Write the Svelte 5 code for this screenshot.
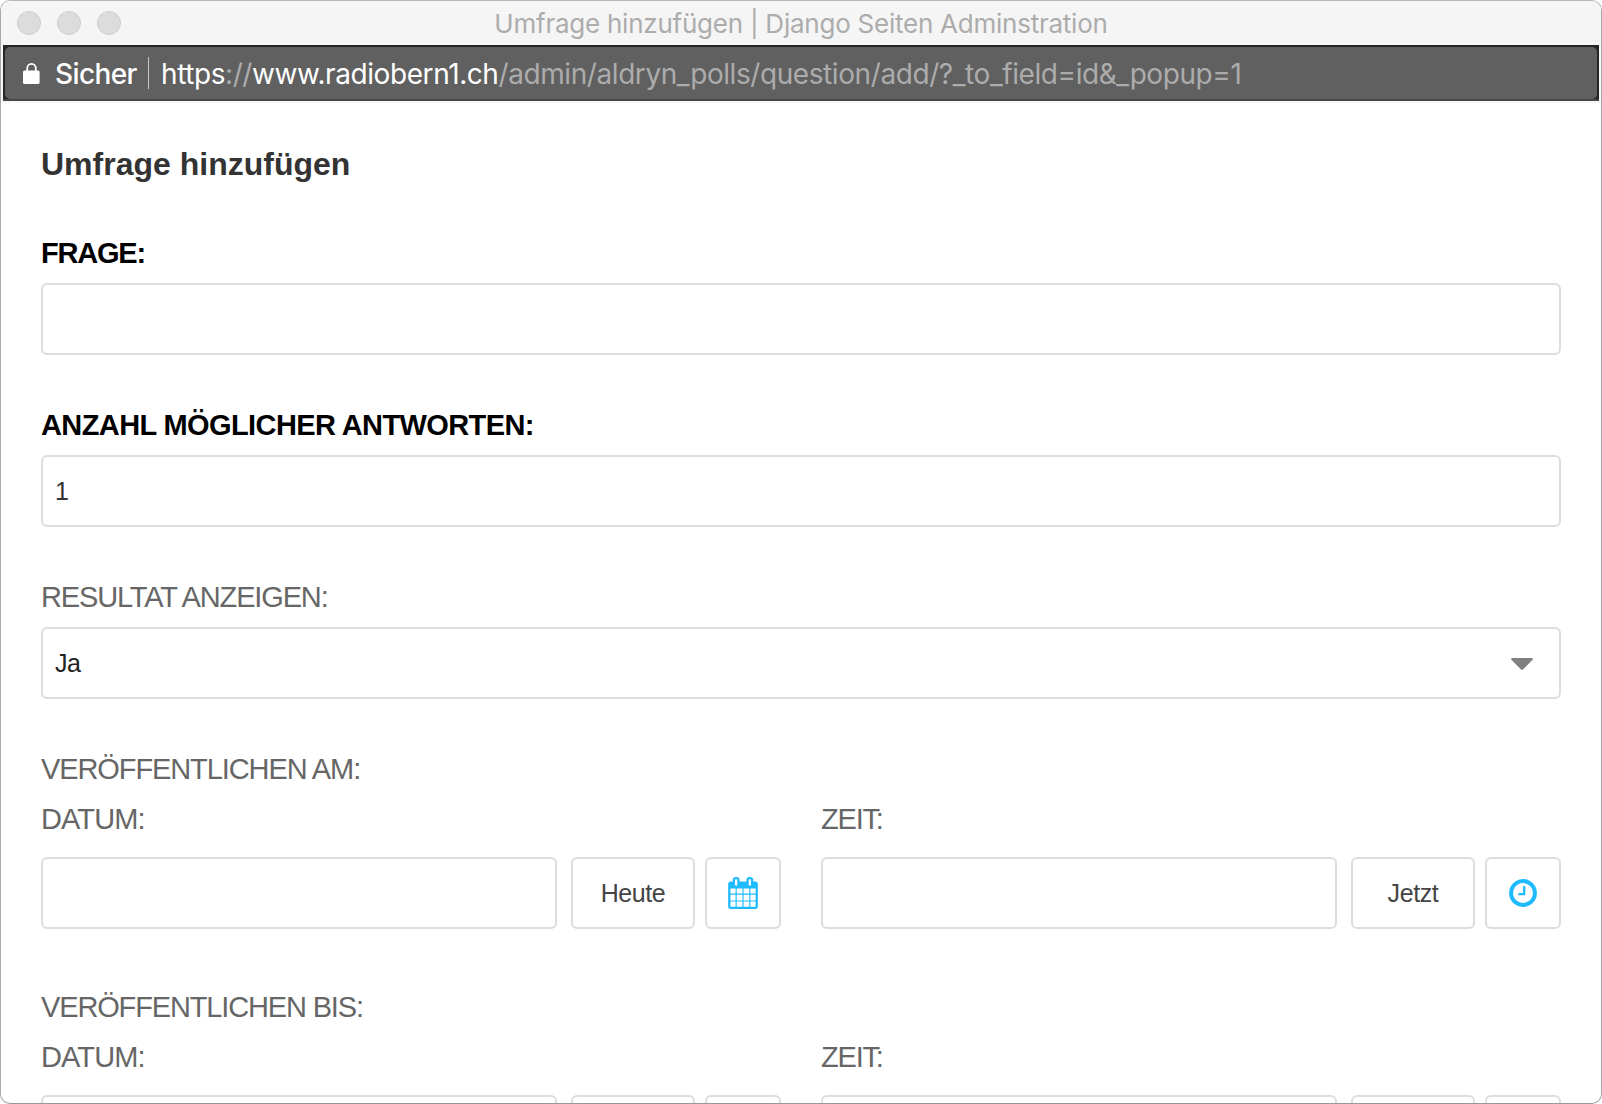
<script>
  const singles = [
    { label: 'Frage:', value: '', required: true, kind: 'text', tracking: -1.2 },
    { label: 'Anzahl möglicher Antworten:', value: '1', required: true, kind: 'text', tracking: -0.6 },
    { label: 'Resultat anzeigen:', value: 'Ja', required: false, kind: 'select', tracking: -1.15 }
  ];
  const ranges = [
    { label: 'Veröffentlichen am:', tracking: -1.1 },
    { label: 'Veröffentlichen bis:', tracking: -1.15 }
  ];
  const parts = [
    { label: 'Datum:', action: 'Heute', icon: 'calendar', tracking: -0.9 },
    { label: 'Zeit:', action: 'Jetzt', icon: 'clock', tracking: -1.2 }
  ];
</script>

<div class="window">
  <header class="titlebar">
    <div class="lights"><i></i><i></i><i></i></div>
    <div class="title">Umfrage hinzufügen | Django Seiten Adminstration</div>
    <div></div>
  </header>

  <div class="urlbar">
    <div class="urlinner">
      <svg class="lock" viewBox="0 0 17 21" width="17" height="21">
        <path d="M4.2 9V5.2a4.300 4.300 0 0 1 8.600 0V9" fill="none" stroke="#fff" stroke-width="1.800" />
        <rect x="0" y="7.500" width="16.600" height="13.500" rx="1.500" fill="#fff" />
      </svg>
      <span class="secure">Sicher</span>
      <span class="divider"></span>
      <span class="url"><b>https</b>://<b>www.radiobern1.ch</b>/admin/aldryn_polls/question/add/?_to_field=id&amp;_popup=1</span>
    </div>
  </div>

  <main>
    <h1>Umfrage hinzufügen</h1>
    {#each singles as f}
      <section class="field">
        <div class="label" class:required={f.required} style:letter-spacing="{f.tracking}px">{f.label}</div>
        <div class="box single" class:select={f.kind === 'select'}>
          <span>{f.value}</span>
          {#if f.kind === 'select'}
            <svg class="arrow" viewBox="0 0 22 12" width="22" height="12">
              <path d="M1 0h20q1.500 .6 .6 1.800L12 11.400q-1 .8-2 0L.4 1.800Q-.5 .6 1 0z" fill="#808080" />
            </svg>
          {/if}
        </div>
      </section>
    {/each}

    {#each ranges as r}
      <section class="range">
        <div class="label" style:letter-spacing="{r.tracking}px">{r.label}</div>
        <div class="columns">
          {#each parts as p}
            <div class="part">
              <div class="label" style:letter-spacing="{p.tracking}px">{p.label}</div>
              <div class="controls">
                <div class="box entry"></div>
                <button class="box action">{p.action}</button>
                <button class="box icon" aria-label={p.icon}>
                  {#if p.icon === 'calendar'}
                    <svg viewBox="64 0 1664 1792" width="30" height="32" fill="#20bbff">
                      <path d="M192 1664h288v-288h-288v288zm352 0h320v-288h-320v288zm-352-352h288v-320h-288v320zm352 0h320v-320h-320v320zm-352-384h288v-288h-288v288zm736 736h320v-288h-320v288zm-384-736h320v-288h-320v288zm768 736h288v-288h-288v288zm-384-352h320v-320h-320v320zm-352-864v-288q0-13-9.500-22.500t-22.500-9.500h-64q-13 0-22.500 9.500t-9.500 22.500v288q0 13 9.500 22.500t22.500 9.500h64q13 0 22.500-9.500t9.500-22.500zm736 864h288v-320h-288v320zm-384-384h320v-288h-320v288zm384 0h288v-288h-288v288zm32-480v-288q0-13-9.500-22.500t-22.500-9.500h-64q-13 0-22.500 9.500t-9.500 22.500v288q0 13 9.500 22.500t22.500 9.500h64q13 0 22.500-9.500t9.500-22.500zm384-64v1280q0 52-38 90t-90 38h-1408q-52 0-90-38t-38-90v-1280q0-52 38-90t90-38h128v-96q0-66 47-113t113-47h64q66 0 113 47t47 113v96h384v-96q0-66 47-113t113-47h64q66 0 113 47t47 113v96h128q52 0 90 38t38 90z" />
                    </svg>
                  {:else}
                    <svg viewBox="128 128 1536 1536" width="28" height="28" fill="#20bbff">
                      <path d="M1024 544v448q0 14-9 23t-23 9h-320q-14 0-23-9t-9-23v-64q0-14 9-23t23-9h224v-352q0-14 9-23t23-9h64q14 0 23 9t9 23zm416 352q0-148-73-273t-198-198-273-73-273 73-198 198-73 273 73 273 198 198 273 73 273-73 198-198 73-273zm224 0q0 209-103 385.500t-279.500 279.500-385.500 103-385.500-103-279.500-279.500-103-385.500 103-385.500 279.500-279.500 385.500-103 385.500 103 279.500 279.500 103 385.500z" />
                    </svg>
                  {/if}
                </button>
              </div>
            </div>
          {/each}
        </div>
      </section>
    {/each}
  </main>
</div>

<style>
  :global(body) {
    background: #fff;
    overflow: hidden;
  }
  .window {
    box-sizing: border-box;
    width: 1602px;
    height: 1104px;
    border: 1px solid #a9a9a9;
    border-top-color: #b7b7b7;
    border-bottom-color: #999;
    border-radius: 10px;
    overflow: hidden;
    background: #fff;
    font-family: 'Liberation Sans', Arial, sans-serif;
  }
  .titlebar {
    display: grid;
    grid-template-columns: 1fr auto 1fr;
    align-items: center;
    height: 44px;
    background: #f5f5f5;
  }
  .lights {
    display: flex;
    gap: 16px;
    padding-left: 16px;
  }
  .lights i {
    box-sizing: border-box;
    width: 24px;
    height: 24px;
    border: 1px solid #cdcdcd;
    border-radius: 50%;
    background: #dcdcdc;
  }
  .title {
    padding-top: 2px;
    font: 400 26px/42px Inter, sans-serif;
    letter-spacing: -0.24px;
    color: #acacac;
    white-space: nowrap;
  }
  .urlbar {
    box-sizing: border-box;
    height: 56px;
    margin: 0 2px;
    padding: 2px;
    background: linear-gradient(#262626 54px, #484848 54px);
    box-shadow: 0 0 0 2px #f7f7f7;
  }
  .urlinner {
    display: flex;
    align-items: center;
    height: 52px;
    border-radius: 5px;
    background: #606060;
    font: 400 28px/50px Inter, sans-serif;
    white-space: nowrap;
  }
  .lock {
    margin: 0 15px 0 18px;
  }
  .secure,
  .url {
    padding-top: 2px;
  }
  .secure {
    width: 93px;
    font-weight: 500;
    color: #fff;
    letter-spacing: -0.6px;
  }
  .divider {
    width: 1px;
    height: 32px;
    margin-right: 12px;
    background: #c8c8c8;
  }
  .url {
    color: #acacac;
    letter-spacing: -0.42px;
  }
  .url b {
    font-weight: 400;
    color: #fff;
  }
  main {
    padding: 43px 40px 0;
  }
  h1 {
    margin: 0 0 49px;
    font-size: 32px;
    line-height: 40px;
    color: #333;
  }
  .label {
    font-size: 29px;
    line-height: 40px;
    color: #666;
    text-transform: uppercase;
    white-space: nowrap;
  }
  .label.required {
    font-weight: 700;
    color: #000;
  }
  .field {
    margin-bottom: 50px;
  }
  .box {
    box-sizing: border-box;
    height: 72px;
    border: 2px solid #ddd;
    border-radius: 6px;
    background: #fff;
    font: 25px/28px 'Liberation Sans', Arial, sans-serif;
    letter-spacing: -0.4px;
    color: #333;
  }
  .single {
    display: flex;
    justify-content: space-between;
    align-items: center;
    margin-top: 10px;
    padding: 0 26px 0 12px;
  }
  .arrow {
    margin-top: 1px;
  }
  .select {
    color: #222;
  }
  .range {
    margin-bottom: 58px;
  }
  .columns {
    display: grid;
    grid-template-columns: 1fr 1fr;
    gap: 40px;
    margin-top: 10px;
  }
  .controls {
    display: flex;
    margin-top: 18px;
  }
  .entry {
    flex: 1;
  }
  .action {
    width: 124px;
    margin: 0 10px 0 14px;
    padding: 0;
    color: #444;
  }
  .icon {
    display: flex;
    align-items: center;
    justify-content: center;
    width: 76px;
    padding: 0;
  }
</style>
